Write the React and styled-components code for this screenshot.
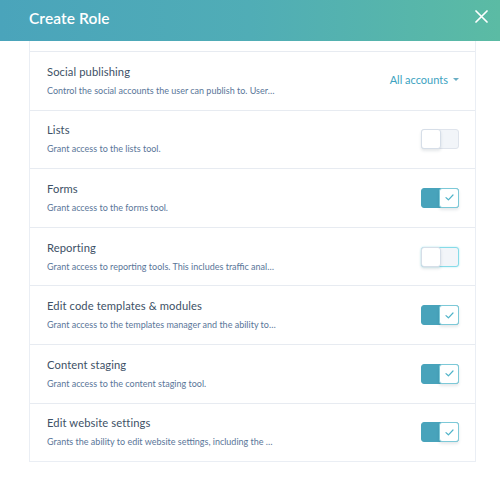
import styled, { createGlobalStyle } from "styled-components";

const GlobalStyle = createGlobalStyle`
  html, body {
    margin: 0;
    padding: 0;
    background: #ffffff;
  }
  body {
    font-family: Lato, "Open Sans", sans-serif;
    -webkit-font-smoothing: antialiased;
  }
`;

const permissions = [
  {
    title: "Social publishing",
    text: "Control the social accounts the user can publish to. User…",
    control: "dropdown",
  },
  { title: "Lists", text: "Grant access to the lists tool.", on: false },
  { title: "Forms", text: "Grant access to the forms tool.", on: true },
  {
    title: "Reporting",
    text: "Grant access to reporting tools. This includes traffic anal…",
    on: false,
    focused: true,
  },
  {
    title: "Edit code templates & modules",
    text: "Grant access to the templates manager and the ability to…",
    on: true,
  },
  {
    title: "Content staging",
    text: "Grant access to the content staging tool.",
    on: true,
  },
  {
    title: "Edit website settings",
    text: "Grants the ability to edit website settings, including the …",
    on: true,
  },
];

const Toggle = ({ on, focused }) => (
  <ToggleTrack $on={on} $focused={focused}>
    <ToggleKnob $on={on}>
      {on && (
        <svg width="9" height="7" viewBox="0 0 9 7" fill="none">
          <path
            d="M1 3.6 L3.4 5.8 L8 1"
            stroke="#4fb3c8"
            strokeWidth="1.2"
            strokeLinecap="round"
            strokeLinejoin="round"
          />
        </svg>
      )}
    </ToggleKnob>
  </ToggleTrack>
);

const App = () => {
  return (
    <>
      <GlobalStyle />
      <Page>
        <Header>
          <Title>Create Role</Title>
          <CloseButton aria-label="Close">
            <svg width="13" height="13" viewBox="0 0 13 13">
              <path
                d="M1 1 L12 12 M12 1 L1 12"
                stroke="#ffffff"
                strokeWidth="1.7"
                strokeLinecap="round"
              />
            </svg>
          </CloseButton>
        </Header>
        <Body>
          <Card>
            <CardStub />
            {permissions.map((p) => (
              <Row key={p.title}>
                <RowText>
                  <RowTitle>{p.title}</RowTitle>
                  <RowDesc>{p.text}</RowDesc>
                </RowText>
                {p.control === "dropdown" ? (
                  <Dropdown>
                    All accounts
                    <Caret />
                  </Dropdown>
                ) : (
                  <Toggle on={p.on} focused={p.focused} />
                )}
              </Row>
            ))}
          </Card>
        </Body>
      </Page>
    </>
  );
};

export default App;

const Page = styled.div`
  width: 500px;
  height: 489px;
  overflow: hidden;
  display: flex;
  flex-direction: column;
`;

const Header = styled.div`
  height: 41px;
  box-sizing: border-box;
  flex-shrink: 0;
  display: flex;
  align-items: flex-start;
  justify-content: space-between;
  padding: 0 11px 0 29px;
  background: linear-gradient(90deg, #4aa4bb 0%, #50adb6 50%, #5bbba4 100%);
`;

const Title = styled.h1`
  margin: 8px 0 0;
  color: #ffffff;
  font-size: 15.5px;
  line-height: 20px;
  font-weight: 600;
  letter-spacing: 0.1px;
`;

const CloseButton = styled.button`
  border: none;
  background: transparent;
  padding: 0;
  margin-top: 9px;
  width: 15px;
  height: 15px;
  display: flex;
  align-items: center;
  justify-content: center;
  cursor: pointer;
`;

const Body = styled.div`
  padding: 0 24px 0 29px;
`;

const Card = styled.div`
  border: 1px solid #eaeef4;
  border-top: none;
  display: flex;
  flex-direction: column;
`;

const CardStub = styled.div`
  height: 10px;
`;

const Row = styled.div`
  height: 58.6px;
  box-sizing: border-box;
  border-top: 1px solid #e7ebf1;
  display: flex;
  align-items: center;
  justify-content: space-between;
  padding: 0 16px 0 17px;
`;

const RowText = styled.div`
  display: flex;
  flex-direction: column;
  gap: 6px;
`;

const RowTitle = styled.div`
  color: #3d5166;
  font-size: 11.2px;
  line-height: 14px;
  letter-spacing: 0.1px;
`;

const RowDesc = styled.div`
  color: #5a7699;
  font-size: 9px;
  line-height: 12px;
`;

const Dropdown = styled.div`
  display: flex;
  align-items: center;
  gap: 5px;
  color: #3ca2bf;
  font-size: 11px;
  margin-top: -2px;
`;

const Caret = styled.span`
  width: 0;
  height: 0;
  border-left: 3px solid transparent;
  border-right: 3px solid transparent;
  border-top: 3px solid #6aaec4;
`;

const ToggleTrack = styled.div`
  width: 38px;
  height: 20px;
  box-sizing: border-box;
  border-radius: 3px;
  display: flex;
  justify-content: ${(p) => (p.$on ? "flex-end" : "flex-start")};
  background: ${(p) => (p.$on ? "#48a3bb" : "#f2f5f9")};
  border: 1px solid
    ${(p) => (p.$on ? "#48a3bb" : p.$focused ? "#86dbe8" : "#dfe4ec")};
  box-shadow: ${(p) => (p.$focused ? "0 0 2px rgba(110, 215, 232, 0.6)" : "none")};
`;

const ToggleKnob = styled.div`
  width: 20px;
  height: 20px;
  margin: -1px;
  box-sizing: border-box;
  border-radius: 3px;
  background: #ffffff;
  border: 1px solid ${(p) => (p.$on ? "#7cc9d8" : "#d6dee8")};
  box-shadow: 0 2px 3px rgba(45, 62, 80, 0.12);
  display: flex;
  align-items: center;
  justify-content: center;
`;
